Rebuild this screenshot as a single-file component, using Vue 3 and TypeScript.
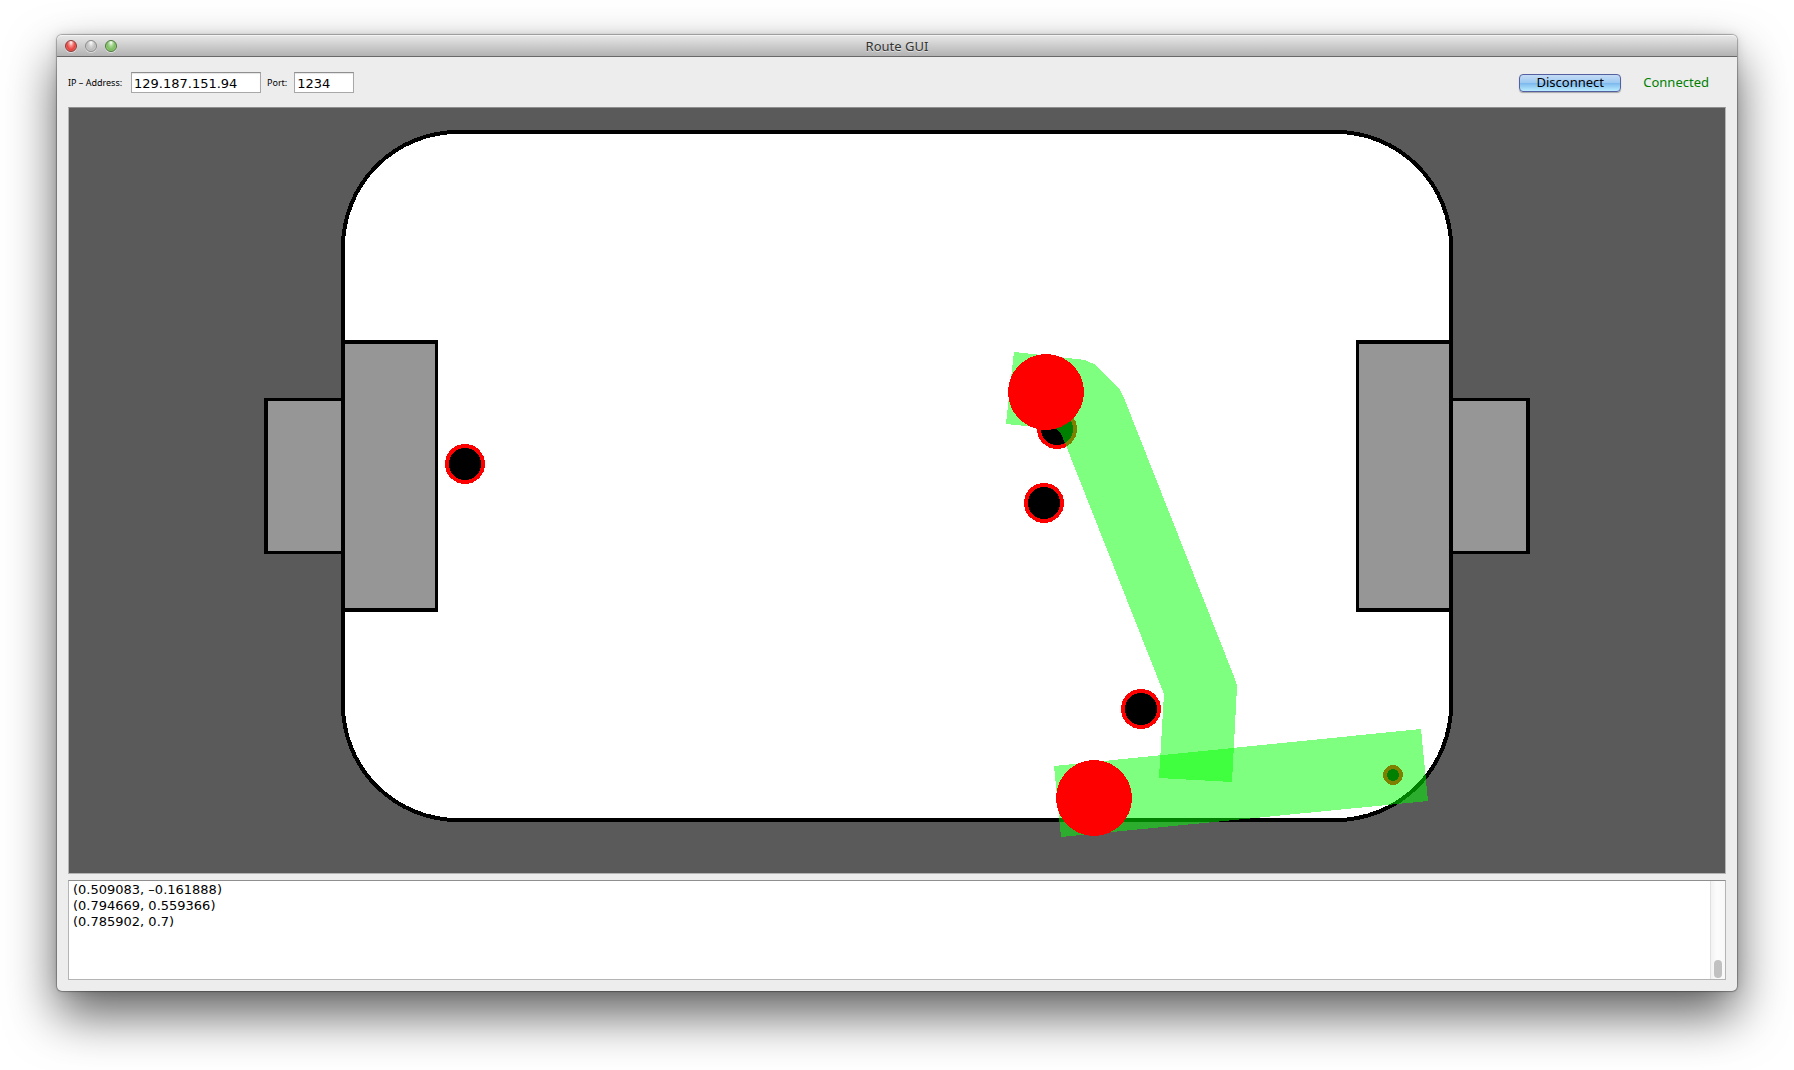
<script setup lang="ts">
import { ref } from 'vue'

interface Disc { x: number; y: number; r: number; core: number }

const address = ref('129.187.151.94')
const port = ref('1234')
const connected = ref(true)
const log = ref('(0.509083, –0.161888)\n(0.794669, 0.559366)\n(0.785902, 0.7)')

const discs: Disc[] = [
  { x: 396, y: 356, r: 20, core: 16 },
  { x: 988, y: 321, r: 20, core: 16 },
  { x: 975, y: 395, r: 20, core: 16 },
  { x: 1072, y: 601, r: 20, core: 16 },
  { x: 1324, y: 667, r: 10, core: 6 },
]

const robots = [
  { x: 977, y: 284 },
  { x: 1025, y: 690 },
]

const routes = [
  '945,244 1008,251 1016,252 1027,257 1051,282 1055,290 1166,571 1168,578 1163,674 1090,670 1095,586 996,335 992,326 987,321 976,320 937,316',
  '985,658 1352,621 1359,693 992,729',
]
</script>

<template>
  <main class="desktop">
    <section class="window">
      <header class="titlebar">
        <div class="lights">
          <button class="light red" type="button" aria-label="Close"></button>
          <button class="light grey" type="button" aria-label="Minimize"></button>
          <button class="light green" type="button" aria-label="Zoom"></button>
        </div>
        <h1>Route GUI</h1>
      </header>

      <div class="content">
        <form class="toolbar" @submit.prevent="connected = !connected">
          <label for="address" class="address-label">IP – Address:</label>
          <input id="address" v-model="address" class="address" type="text" />
          <label for="port">Port:</label>
          <input id="port" v-model="port" class="port" type="text" />
          <button class="push" type="submit">{{ connected ? 'Disconnect' : 'Connect' }}</button>
          <output class="status">{{ connected ? 'Connected' : 'Disconnected' }}</output>
        </form>

        <svg class="field" viewBox="0 0 1656 765" shape-rendering="crispEdges">
          <rect x="274" y="24" width="1108" height="688" rx="115" fill="#fff" stroke="#000" stroke-width="4" />
          <!-- goals -->
          <rect x="195" y="290" width="80" height="156" />
          <rect x="199" y="293" width="73" height="150" fill="#969696" />
          <rect x="1381" y="290" width="80" height="156" />
          <rect x="1384" y="293" width="73" height="150" fill="#969696" />
          <!-- goal areas -->
          <rect x="272" y="232" width="97" height="272" />
          <rect x="276" y="236" width="90" height="264" fill="#969696" />
          <rect x="1287" y="232" width="97" height="272" />
          <rect x="1290" y="236" width="90" height="264" fill="#969696" />

          <g v-for="(d, i) in discs" :key="'d' + i">
            <circle :cx="d.x" :cy="d.y" :r="d.r" fill="#f00" />
            <circle :cx="d.x" :cy="d.y" :r="d.core" />
          </g>
          <polygon v-for="(p, i) in routes" :key="'p' + i" :points="p" fill="#0f0" fill-opacity="0.5" />
          <circle v-for="(r, i) in robots" :key="'r' + i" :cx="r.x" :cy="r.y" r="38" fill="#f00" />
        </svg>

        <div class="log">
          <textarea v-model="log" readonly aria-label="Route log"></textarea>
          <div class="track"><div class="thumb"></div></div>
        </div>
      </div>
    </section>
  </main>
</template>

<style>
body {
  margin: 0;
  background: #fff;
}
</style>

<style scoped>
.desktop {
  padding: 35px 57px 79px;
  overflow: hidden;
  font-family: "Noto Sans", "Open Sans", sans-serif;
  font-size: 13px;
  line-height: 16px;
  color: #000;
}
.window {
  border-radius: 5px;
  background: #ededed;
  box-shadow:
    0 0 1px 1px rgba(0, 0, 0, 0.3),
    0 0 12px rgba(0, 0, 0, 0.12),
    0 24px 50px rgba(0, 0, 0, 0.62);
}
.titlebar {
  display: grid;
  grid-template-columns: 1fr auto 1fr;
  align-items: center;
  box-sizing: border-box;
  height: 22px;
  padding: 0 8px;
  border-top: 1px solid #f4f4f4;
  border-bottom: 1px solid #686868;
  border-radius: 5px 5px 0 0;
  background: linear-gradient(#e6e6e6, #b2b2b2);
}
h1 {
  margin: 0;
  font-size: 13px;
  font-weight: 400;
  color: #333;
  text-shadow: 0 1px 0 rgba(255, 255, 255, 0.5);
}
.lights {
  display: flex;
  gap: 8px;
}
.light {
  width: 12px;
  height: 12px;
  padding: 0;
  border: 1px solid #777;
  border-radius: 50%;
  box-shadow: 0 1px 0 rgba(255, 255, 255, 0.5);
}
.red {
  border-color: #8e3a38;
  background: radial-gradient(ellipse at 50% 15%, #fff 0, #f58a86 30%, #e5433f 60%, #ff9a92 100%);
}
.grey {
  border-color: #8b8b8b;
  background: radial-gradient(ellipse at 50% 15%, #fff 0, #d6d6d6 30%, #bdbdbd 60%, #e6e6e6 100%);
}
.green {
  border-color: #4d7a3d;
  background: radial-gradient(ellipse at 50% 15%, #fff 0, #a9d796 30%, #7cbd62 60%, #c6f0a6 100%);
}
.content {
  padding: 15px 11px 11px;
}
.toolbar {
  display: flex;
  align-items: center;
  gap: 6px;
  margin-bottom: 14px;
}
label {
  margin-right: 1px;
  font-size: 9px;
  white-space: nowrap;
}
.address-label {
  min-width: 56px;
}
input {
  box-sizing: border-box;
  height: 21px;
  padding: 1px 2px 0;
  border: 1px solid #a8a8a8;
  border-top-color: #8f8f8f;
  background: #fff;
  box-shadow: inset 0 1px 1px #e4e4e4;
  font: 13px/16px "DejaVu Sans", sans-serif;
  color: #000;
  outline: 0;
}
.address {
  width: 130px;
}
.port {
  width: 60px;
}
.push {
  box-sizing: border-box;
  width: 102px;
  height: 18px;
  margin-left: auto;
  padding: 0;
  border: 1px solid #5560a0;
  border-radius: 4px;
  background: linear-gradient(#c5dcf5 0, #9dc9f2 48%, #7db9ee 52%, #b9ecff 100%);
  box-shadow: 0 1px 1px rgba(0, 0, 0, 0.3);
  font: inherit;
  line-height: 15px;
}
.status {
  padding: 0 17px 2px 16px;
  color: #007f00;
}
.field {
  display: block;
  box-sizing: border-box;
  width: 100%;
  height: auto;
  margin-bottom: 6px;
  border: 1px solid #b4b4b4;
  border-top-color: #8f8f8f;
  background: #5a5a5a;
}
.log {
  display: flex;
  box-sizing: border-box;
  height: 100px;
  border: 1px solid #b4b4b4;
  border-top-color: #8f8f8f;
  background: #fff;
}
textarea {
  flex: 1;
  padding: 1px 4px;
  border: 0;
  background: transparent;
  font: 13px/16px "DejaVu Sans", sans-serif;
  color: #000;
  resize: none;
  outline: 0;
}
.track {
  display: flex;
  align-items: flex-end;
  justify-content: center;
  box-sizing: border-box;
  width: 15px;
  padding-bottom: 1px;
  border-left: 1px solid #e0e0e0;
  background: linear-gradient(90deg, #f2f2f2, #fcfcfc 40%, #f8f8f8);
}
.thumb {
  width: 8px;
  height: 18px;
  border-radius: 4px;
  background: #c1c1c1;
}
</style>
